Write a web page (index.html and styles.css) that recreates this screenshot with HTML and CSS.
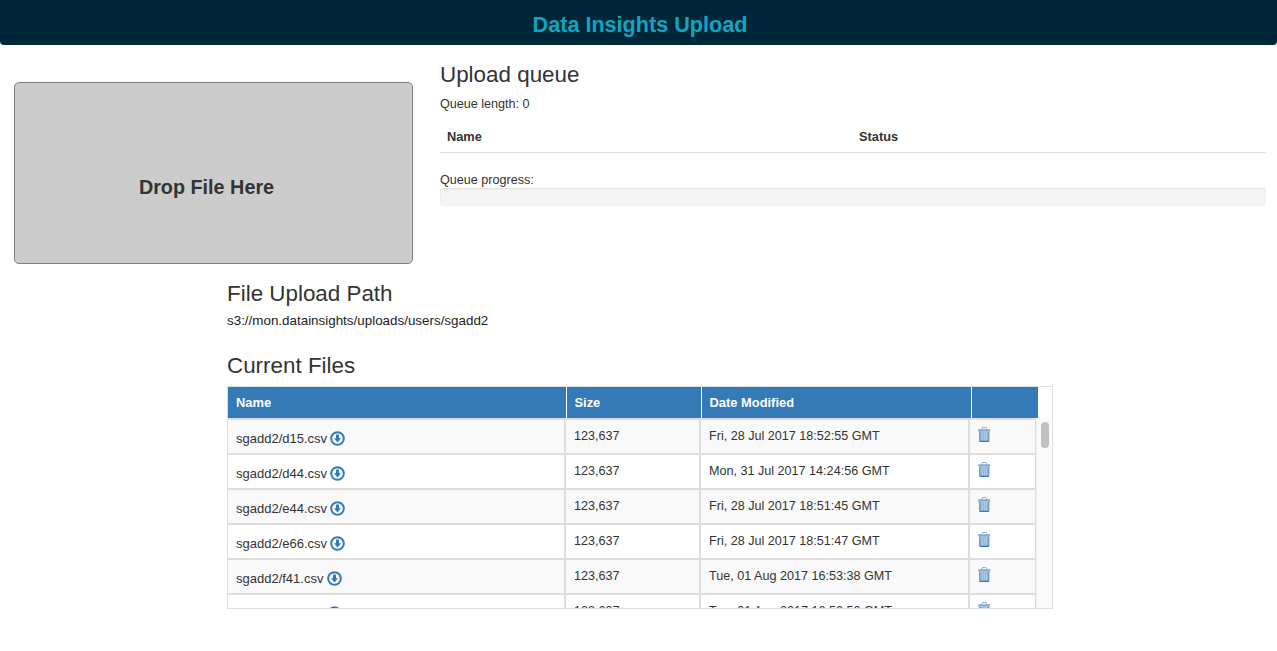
FILE: index.html
```html
<!DOCTYPE html>
<html lang="en">
<head>
    <meta charset="UTF-8">
    <meta name="viewport" content="width=device-width, initial-scale=1.0">
    <title>Data Insights Upload</title>
    <link rel="stylesheet" href="styles.css">
</head>
<body>

    <svg class="icon-defs" width="0" height="0" aria-hidden="true">
        <symbol id="icon-download" viewBox="0 0 15 15">
            <circle cx="7.5" cy="7.5" r="6.3" fill="#fff" stroke="#337ab7" stroke-width="2"/>
            <path d="M6 3.6h3v3.6h2l-3.5 4.2-3.5-4.2h2z" fill="#337ab7"/>
        </symbol>
        <symbol id="icon-trash" viewBox="0 0 13 16">
            <path d="M4 2.6V1.6Q4 .5 5 .5h3q1 0 1 1.1v1" fill="none" stroke="#80a9d0" stroke-width="1"/>
            <rect x="0" y="2.4" width="13" height="2.4" rx=".6" fill="#80a9d0"/>
            <path d="M1.2 4.8h10.6v10q0 1-1 1H2.2q-1 0-1-1z" fill="#8fb3d6"/>
            <path d="M1.2 14.6h10.6v.4q0 .9-1 .9H2.2q-1 0-1-.9z" fill="#337ab7"/>
            <path d="M1.7 5v9.6M11.3 5v9.6" stroke="#5c93c6" stroke-width="1"/>
            <path d="M4.2 5.4v8.8M6.5 5.4v8.8M8.8 5.4v8.8" stroke="#b9d0e6" stroke-width="1"/>
        </symbol>
    </svg>

    <header class="app-header">
        <h1>Data Insights Upload</h1>
    </header>

    <main>
        <section class="upload-row">
            <div class="drop-zone">Drop File Here</div>

            <div class="queue">
                <h3>Upload queue</h3>
                <p class="queue-length">Queue length: 0</p>
                <table class="queue-table">
                    <thead>
                        <tr>
                            <th class="queue-name">Name</th>
                            <th>Status</th>
                        </tr>
                    </thead>
                </table>
                <p class="queue-label">Queue progress:</p>
                <div class="progress"></div>
            </div>
        </section>

        <section class="files">
            <h3>File Upload Path</h3>
            <p class="upload-path">s3://mon.datainsights/uploads/users/sgadd2</p>

            <h3 class="current-title">Current Files</h3>
            <div class="file-box">
                <table class="file-head">
                    <thead>
                        <tr>
                            <th class="col-name">Name</th>
                            <th class="col-size">Size</th>
                            <th class="col-date">Date Modified</th>
                            <th class="col-action"></th>
                        </tr>
                    </thead>
                </table>
                <div class="file-scroll">
                    <div class="file-rows">
                        <table class="file-body">
                            <tbody>
                                <tr>
                                    <td class="col-name">sgadd2/d15.csv <svg class="icon-dl"><use href="#icon-download"/></svg></td>
                                    <td class="col-size">123,637</td>
                                    <td class="col-date">Fri, 28 Jul 2017 18:52:55 GMT</td>
                                    <td class="col-action"><svg class="icon-del"><use href="#icon-trash"/></svg></td>
                                </tr>
                                <tr>
                                    <td class="col-name">sgadd2/d44.csv <svg class="icon-dl"><use href="#icon-download"/></svg></td>
                                    <td class="col-size">123,637</td>
                                    <td class="col-date">Mon, 31 Jul 2017 14:24:56 GMT</td>
                                    <td class="col-action"><svg class="icon-del"><use href="#icon-trash"/></svg></td>
                                </tr>
                                <tr>
                                    <td class="col-name">sgadd2/e44.csv <svg class="icon-dl"><use href="#icon-download"/></svg></td>
                                    <td class="col-size">123,637</td>
                                    <td class="col-date">Fri, 28 Jul 2017 18:51:45 GMT</td>
                                    <td class="col-action"><svg class="icon-del"><use href="#icon-trash"/></svg></td>
                                </tr>
                                <tr>
                                    <td class="col-name">sgadd2/e66.csv <svg class="icon-dl"><use href="#icon-download"/></svg></td>
                                    <td class="col-size">123,637</td>
                                    <td class="col-date">Fri, 28 Jul 2017 18:51:47 GMT</td>
                                    <td class="col-action"><svg class="icon-del"><use href="#icon-trash"/></svg></td>
                                </tr>
                                <tr>
                                    <td class="col-name">sgadd2/f41.csv <svg class="icon-dl"><use href="#icon-download"/></svg></td>
                                    <td class="col-size">123,637</td>
                                    <td class="col-date">Tue, 01 Aug 2017 16:53:38 GMT</td>
                                    <td class="col-action"><svg class="icon-del"><use href="#icon-trash"/></svg></td>
                                </tr>
                                <tr>
                                    <td class="col-name">sgadd2/f44.csv <svg class="icon-dl"><use href="#icon-download"/></svg></td>
                                    <td class="col-size">123,637</td>
                                    <td class="col-date">Tue, 01 Aug 2017 16:50:50 GMT</td>
                                    <td class="col-action"><svg class="icon-del"><use href="#icon-trash"/></svg></td>
                                </tr>
                            </tbody>
                        </table>
                    </div>
                    <div class="scroll-track">
                        <div class="scroll-thumb"></div>
                    </div>
                </div>
            </div>
        </section>
    </main>

</body>
</html>
```

FILE: styles.css
```css
* {
    margin: 0;
    padding: 0;
    box-sizing: border-box;
    font-family: 'Liberation Sans', Arial, sans-serif;
}

body {
    background: #fff;
    color: #333;
    font-size: 12.6px;
    line-height: 18px;
}

.icon-defs {
    display: block;
    height: 0;
}

h3 {
    font-size: 22.4px;
    font-weight: 500;
    line-height: 26px;
}

.app-header {
    background: #00263a;
    height: 45px;
    padding-left: 3px;
    border-radius: 0 0 4px 4px;
    text-align: center;
}

.app-header h1 {
    color: #11a5c1;
    font-size: 21.6px;
    font-weight: bold;
    line-height: 50px;
}

.upload-row {
    display: flex;
    align-items: flex-start;
    padding: 17px 11px 0 14px;
}

.drop-zone {
    flex: none;
    width: 399px;
    height: 182px;
    margin-top: 20px;
    padding: 91px 14px 0 0;
    background: #ccc;
    border: 1px solid #808080;
    border-radius: 5px;
    color: #333;
    font-size: 19.8px;
    font-weight: bold;
    line-height: 26px;
    text-align: center;
}

.queue {
    flex: 1;
    margin-left: 27px;
}

.queue-length {
    margin-top: 7px;
}

.queue-table {
    width: 100%;
    margin-top: 7px;
    border-collapse: collapse;
}

.queue-table th {
    height: 32px;
    padding: 2px 7px 0;
    border-bottom: 1px solid #ddd;
    font-size: 12.8px;
    text-align: left;
}

.queue-name {
    width: 412px;
}

.queue-label {
    margin-top: 20px;
    line-height: 15px;
}

.progress {
    height: 18px;
    background: #f5f5f5;
    border-radius: 4px;
    box-shadow: inset 0 1px 2px rgba(0, 0, 0, 0.1);
}

.files {
    width: 826px;
    margin: 17px 0 0 227px;
}

.upload-path {
    margin-top: 5px;
    color: #222;
    font-size: 13.4px;
}

.current-title {
    margin-top: 23px;
}

.file-box {
    height: 223px;
    margin-top: 7px;
    border: 1px solid #ddd;
    overflow: hidden;
}

table {
    border-collapse: collapse;
    table-layout: fixed;
}

.file-head {
    width: 810px;
}

.file-head th {
    height: 31px;
    padding: 0 8px;
    background: #337ab7;
    border-left: 1px solid #fff;
    color: #fff;
    font-size: 12.9px;
    text-align: left;
}

.file-head th:first-child {
    border-left: none;
}

.file-head .col-name { width: 338px; }
.file-head .col-size { width: 135px; }
.file-head .col-date { width: 270px; }
.file-head .col-action { width: 67px; }

.file-scroll {
    display: flex;
    height: 190px;
}

.file-rows {
    flex: none;
    width: 808px;
    overflow: hidden;
}

.file-body {
    width: 808px;
    border-top: 1px solid #ddd;
}

.file-body td {
    height: 35px;
    padding: 0 8px 1px;
    border: 2px solid #ddd;
    border-left-width: 0;
    background: #fff;
    white-space: nowrap;
}

.file-body tr:nth-child(odd) td {
    background: #f9f9f9;
}

.file-body .col-name {
    width: 337px;
    padding: 4px 8px 0;
    font-size: 13px;
}

.file-body .col-size { width: 135px; }
.file-body .col-date { width: 269px; }
.file-body .col-action {
    width: 67px;
    padding-bottom: 5px;
}

.icon-dl {
    width: 15px;
    height: 15px;
    margin-left: -0.5px;
    vertical-align: -3px;
}

.icon-del {
    display: block;
    width: 12.5px;
    height: 15px;
}

.scroll-track {
    flex: none;
    width: 15px;
    padding: 4px 0 0 4px;
    background: #fafafa;
    border-left: 1px solid #eee;
}

.scroll-thumb {
    width: 8px;
    height: 26px;
    background: #c1c1c1;
    border-radius: 4px;
}
```
